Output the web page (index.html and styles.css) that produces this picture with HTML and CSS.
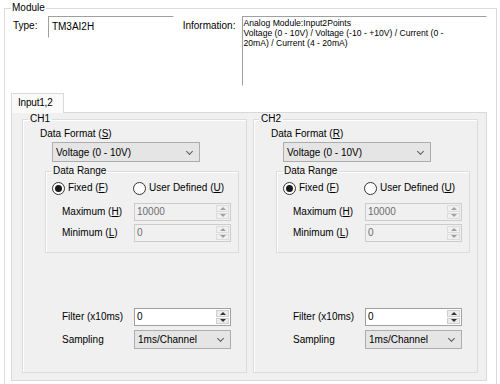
FILE: index.html
```html
<!DOCTYPE html>
<html>
<head>
	<meta charset="utf-8">
	<meta name="viewport" content="width=device-width,initial-scale=1.0">
	<title>Module</title>

	<link rel="stylesheet" href="styles.css">

</head>
<body>


	<!------------------------------------>
	<!----------- MODULE GROUP ----------->
	<!------------------------------------>
	<fieldset class="group module">
		<legend>Module</legend>

		<section class="module-head">
			<label class="head-label">Type:</label>
			<div class="textbox type-box">TM3AI2H</div>
			<label class="head-label info-label">Information:</label>
			<div class="textbox info-box">Analog Module:Input2Points<br>Voltage (0 - 10V) / Voltage (-10 - +10V) / Current (0 -<br>20mA) / Current (4 - 20mA)</div>
		</section>


		<!------------------------------------>
		<!--------------- TABS --------------->
		<!------------------------------------>
		<nav class="tabs">
			<div class="tab active">Input1,2</div>
		</nav>

		<section class="tab-page">

			<!-- CH1 -->
			<fieldset class="group channel">
				<legend>CH1</legend>
				<div class="field-title">Data Format (<u>S</u>)</div>
				<div class="combo format">Voltage (0 - 10V)</div>

				<fieldset class="group range">
					<legend>Data Range</legend>
					<div class="radios">
						<span class="radio checked"><i></i><span>Fixed (<u>F</u>)</span></span>
						<span class="radio"><i></i><span>User Defined (<u>U</u>)</span></span>
					</div>
					<div class="form-grid limits">
						<span>Maximum (<u>H</u>)</span>
						<div class="spin disabled"><span class="spin-value">10000</span><span class="spin-btns"><b class="up"></b><b class="down"></b></span></div>
						<span>Minimum (<u>L</u>)</span>
						<div class="spin disabled"><span class="spin-value">0</span><span class="spin-btns"><b class="up"></b><b class="down"></b></span></div>
					</div>
				</fieldset>

				<div class="form-grid settings">
					<span>Filter (x10ms)</span>
					<div class="spin"><span class="spin-value">0</span><span class="spin-btns"><b class="up"></b><b class="down"></b></span></div>
					<span>Sampling</span>
					<div class="combo">1ms/Channel</div>
				</div>
			</fieldset>

			<!-- CH2 -->
			<fieldset class="group channel">
				<legend>CH2</legend>
				<div class="field-title">Data Format (<u>R</u>)</div>
				<div class="combo format">Voltage (0 - 10V)</div>

				<fieldset class="group range">
					<legend>Data Range</legend>
					<div class="radios">
						<span class="radio checked"><i></i><span>Fixed (<u>F</u>)</span></span>
						<span class="radio"><i></i><span>User Defined (<u>U</u>)</span></span>
					</div>
					<div class="form-grid limits">
						<span>Maximum (<u>H</u>)</span>
						<div class="spin disabled"><span class="spin-value">10000</span><span class="spin-btns"><b class="up"></b><b class="down"></b></span></div>
						<span>Minimum (<u>L</u>)</span>
						<div class="spin disabled"><span class="spin-value">0</span><span class="spin-btns"><b class="up"></b><b class="down"></b></span></div>
					</div>
				</fieldset>

				<div class="form-grid settings">
					<span>Filter (x10ms)</span>
					<div class="spin"><span class="spin-value">0</span><span class="spin-btns"><b class="up"></b><b class="down"></b></span></div>
					<span>Sampling</span>
					<div class="combo">1ms/Channel</div>
				</div>
			</fieldset>

		</section>
	</fieldset>

</body>
</html>
```

FILE: styles.css
```css
body {
	margin:0;
	background:#fff;
	color:#000;
	font-family:"Liberation Sans", Arial, sans-serif;
	font-size:10px;
	line-height:12px;
}

div, span, fieldset, section, nav, label {
	box-sizing: border-box;
}

fieldset {
	margin:0;
	padding:0;
	min-width:0;
}

legend {
	padding:0 2px;
	line-height:12px;
}

u { text-decoration-thickness:1px; text-underline-offset:1px; }

.group {
	border:1px solid #dcdcdc;
}

/*************************************/
/**            MODULE              **/
/*************************************/
.module {
	margin:2px 3px 0 4px;
	padding:0 9px 6px 6px;
}

.module > legend { padding:0 1px; }

.module-head {
	display:flex;
	align-items:flex-start;
	margin-top:2px;
	padding-left:2px;
}

.head-label {
	width:35px;
	padding-top:4px;
}

.info-label {
	width:59px;
	margin-left:9px;
}

.textbox {
	background:#fff;
	border:1px solid #fff;
	border-top-color:#a0a0a0;
	border-left-color:#a0a0a0;
}

.type-box {
	width:126px;
	height:22px;
	padding:4px 0 0 3px;
}

.info-box {
	width:246px;
	height:70px;
	padding:1px 0 0 1px;
	font-size:8.6px;
	line-height:10px;
}

/*************************************/
/**             TABS               **/
/*************************************/
.tabs {
	display:flex;
	margin-top:7px;
}

.tab {
	position:relative;
	z-index:1;
	width:53px;
	height:20px;
	margin-bottom:-1px;
	padding:3px 0 0 6px;
	background:#fafafa;
	border:1px solid #d9d9d9;
	border-bottom:none;
	letter-spacing:-0.2px;
}

.tab-page {
	display:flex;
	gap:6px;
	padding:0 7px 7px 10px;
	background:#f0f0f0;
	border:1px solid #d9d9d9;
}

/*************************************/
/**           CHANNELS             **/
/*************************************/
.channel {
	width:225px;
	height:260px;
	box-shadow:inset 1px 1px 0 #fff;
}

.channel > legend { margin-left:5px; }

.field-title {
	margin:3px 0 0 17px;
}

.combo {
	position:relative;
	height:19px;
	padding:3px 0 0 3px;
	background:#e5e5e5;
	border:1px solid #adadad;
}

.combo::after {
	content:'';
	position:absolute;
	right:7px;
	top:5px;
	width:4px;
	height:4px;
	border-right:1px solid #5a5a5a;
	border-bottom:1px solid #5a5a5a;
	transform:rotate(45deg);
}

.combo.format {
	width:148px;
	height:20px;
	margin:2px 0 0 29px;
	padding-top:4px;
}

.combo.format::after { top:6px; }

.range {
	width:194px;
	margin:3px 0 0 22px;
	padding-bottom:10px;
	box-shadow:inset 1px 1px 0 #fff;
}

.range > legend { margin-left:5px; }

.radios {
	display:flex;
	height:14px;
	margin-top:4px;
	padding-left:6px;
	align-items:center;
}

.radio {
	display:flex;
	align-items:center;
	gap:3px;
}

.radio:first-child { width:81px; }

.radio i {
	width:13px;
	height:13px;
	border:1px solid #333;
	border-radius:50%;
	background:#fff;
	box-sizing:border-box;
	display:flex;
	align-items:center;
	justify-content:center;
}

.radio.checked i::after {
	content:'';
	width:7px;
	height:7px;
	border-radius:50%;
	background:#1a1a1a;
}

/*************************************/
/**          FORM GRIDS            **/
/*************************************/
.form-grid {
	display:grid;
	grid-template-columns:72px 97px;
	align-items:center;
}

.limits {
	grid-template-rows:18px 18px;
	row-gap:3px;
	margin:8px 0 0 16px;
}

.settings {
	grid-template-rows:18px 19px;
	row-gap:4px;
	margin:55px 0 0 39px;
}

.spin {
	display:flex;
	height:100%;
	background:#fff;
	border:1px solid #a0a0a0;
}

.spin-value {
	flex:1;
	padding:2px 0 0 2px;
}

.spin-btns {
	display:flex;
	flex-direction:column;
	width:15px;
	padding:1px;
	gap:1px;
}

.spin-btns b {
	flex:1;
	display:flex;
	align-items:center;
	justify-content:center;
	background:#ececec;
	border:1px solid #cfcfcf;
}

.spin-btns .up::after {
	content:'';
	border-left:3px solid transparent;
	border-right:3px solid transparent;
	border-bottom:3px solid #333;
}

.spin-btns .down::after {
	content:'';
	border-left:3px solid transparent;
	border-right:3px solid transparent;
	border-top:3px solid #333;
}

.spin.disabled {
	background:#f0f0f0;
	border-color:#cccccc;
	color:#6d6d6d;
}

.spin.disabled .spin-btns b {
	background:#f0f0f0;
	border-color:#dcdcdc;
}

.spin.disabled .spin-btns .up::after { border-bottom-color:#a0a0a0; }
.spin.disabled .spin-btns .down::after { border-top-color:#a0a0a0; }
```
